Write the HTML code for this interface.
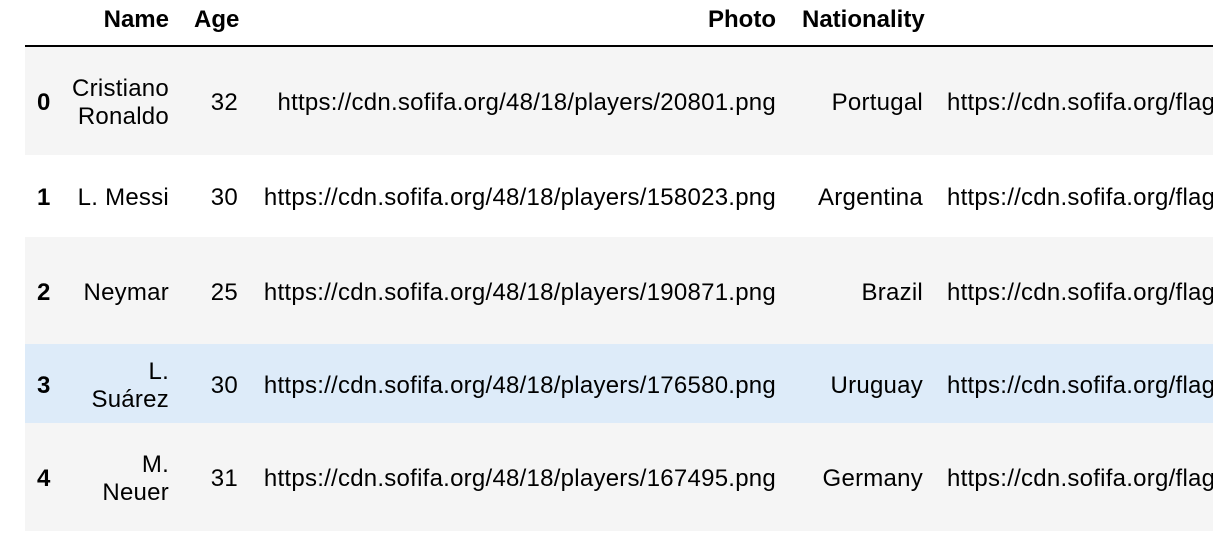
<!DOCTYPE html>
<html><head><meta charset="utf-8"><style>
html,body{margin:0;padding:0;background:#fff;width:1232px;height:538px;overflow:hidden;font-family:"Liberation Sans",Arial,sans-serif;font-size:24px;color:#000}
.wrap{position:absolute;left:25px;top:0;width:1188px;height:538px;overflow:hidden}
.row{position:absolute;left:0;width:1188px}
.c{position:absolute;top:50%;transform:translateY(-50%);margin-top:2px;line-height:28px;white-space:nowrap;letter-spacing:0.25px}
.r{text-align:right}
.b{font-weight:bold;letter-spacing:0}
.h .c{margin-top:0}
</style></head><body>
<div class="wrap">
<div class="row h" style="top:0;height:40px">
<div class="c b r" style="right:1044px;">Name</div>
<div class="c b" style="left:169px;">Age</div>
<div class="c b r" style="right:437px;">Photo</div>
<div class="c b" style="left:777px;">Nationality</div>
</div>
<div style="position:absolute;left:0;top:45px;width:1188px;height:2px;background:#000"></div>

<div class="row" style="top:47px;height:108px;background:#f5f5f5">
<div class="c b" style="left:12px">0</div>
<div class="c r" style="right:1044px">Cristiano<br>Ronaldo</div>
<div class="c r" style="right:975px">32</div>
<div class="c r" style="right:437px">https://cdn.sofifa.org/48/18/players/20801.png</div>
<div class="c r" style="right:290px">Portugal</div>
<div class="c" style="left:922px">https://cdn.sofifa.org/flags/38.png</div>
</div>
<div class="row" style="top:155px;height:82px;background:#fff">
<div class="c b" style="left:12px">1</div>
<div class="c r" style="right:1044px">L. Messi</div>
<div class="c r" style="right:975px">30</div>
<div class="c r" style="right:437px">https://cdn.sofifa.org/48/18/players/158023.png</div>
<div class="c r" style="right:290px">Argentina</div>
<div class="c" style="left:922px">https://cdn.sofifa.org/flags/52.png</div>
</div>
<div class="row" style="top:237px;height:107px;background:#f5f5f5">
<div class="c b" style="left:12px">2</div>
<div class="c r" style="right:1044px">Neymar</div>
<div class="c r" style="right:975px">25</div>
<div class="c r" style="right:437px">https://cdn.sofifa.org/48/18/players/190871.png</div>
<div class="c r" style="right:290px">Brazil</div>
<div class="c" style="left:922px">https://cdn.sofifa.org/flags/54.png</div>
</div>
<div class="row" style="top:344px;height:79px;background:#ddebf9">
<div class="c b" style="left:12px">3</div>
<div class="c r" style="right:1044px">L.<br>Suárez</div>
<div class="c r" style="right:975px">30</div>
<div class="c r" style="right:437px">https://cdn.sofifa.org/48/18/players/176580.png</div>
<div class="c r" style="right:290px">Uruguay</div>
<div class="c" style="left:922px">https://cdn.sofifa.org/flags/60.png</div>
</div>
<div class="row" style="top:423px;height:108px;background:#f5f5f5">
<div class="c b" style="left:12px">4</div>
<div class="c r" style="right:1044px">M.<br>Neuer</div>
<div class="c r" style="right:975px">31</div>
<div class="c r" style="right:437px">https://cdn.sofifa.org/48/18/players/167495.png</div>
<div class="c r" style="right:290px">Germany</div>
<div class="c" style="left:922px">https://cdn.sofifa.org/flags/21.png</div>
</div>
</div>
</body></html>
